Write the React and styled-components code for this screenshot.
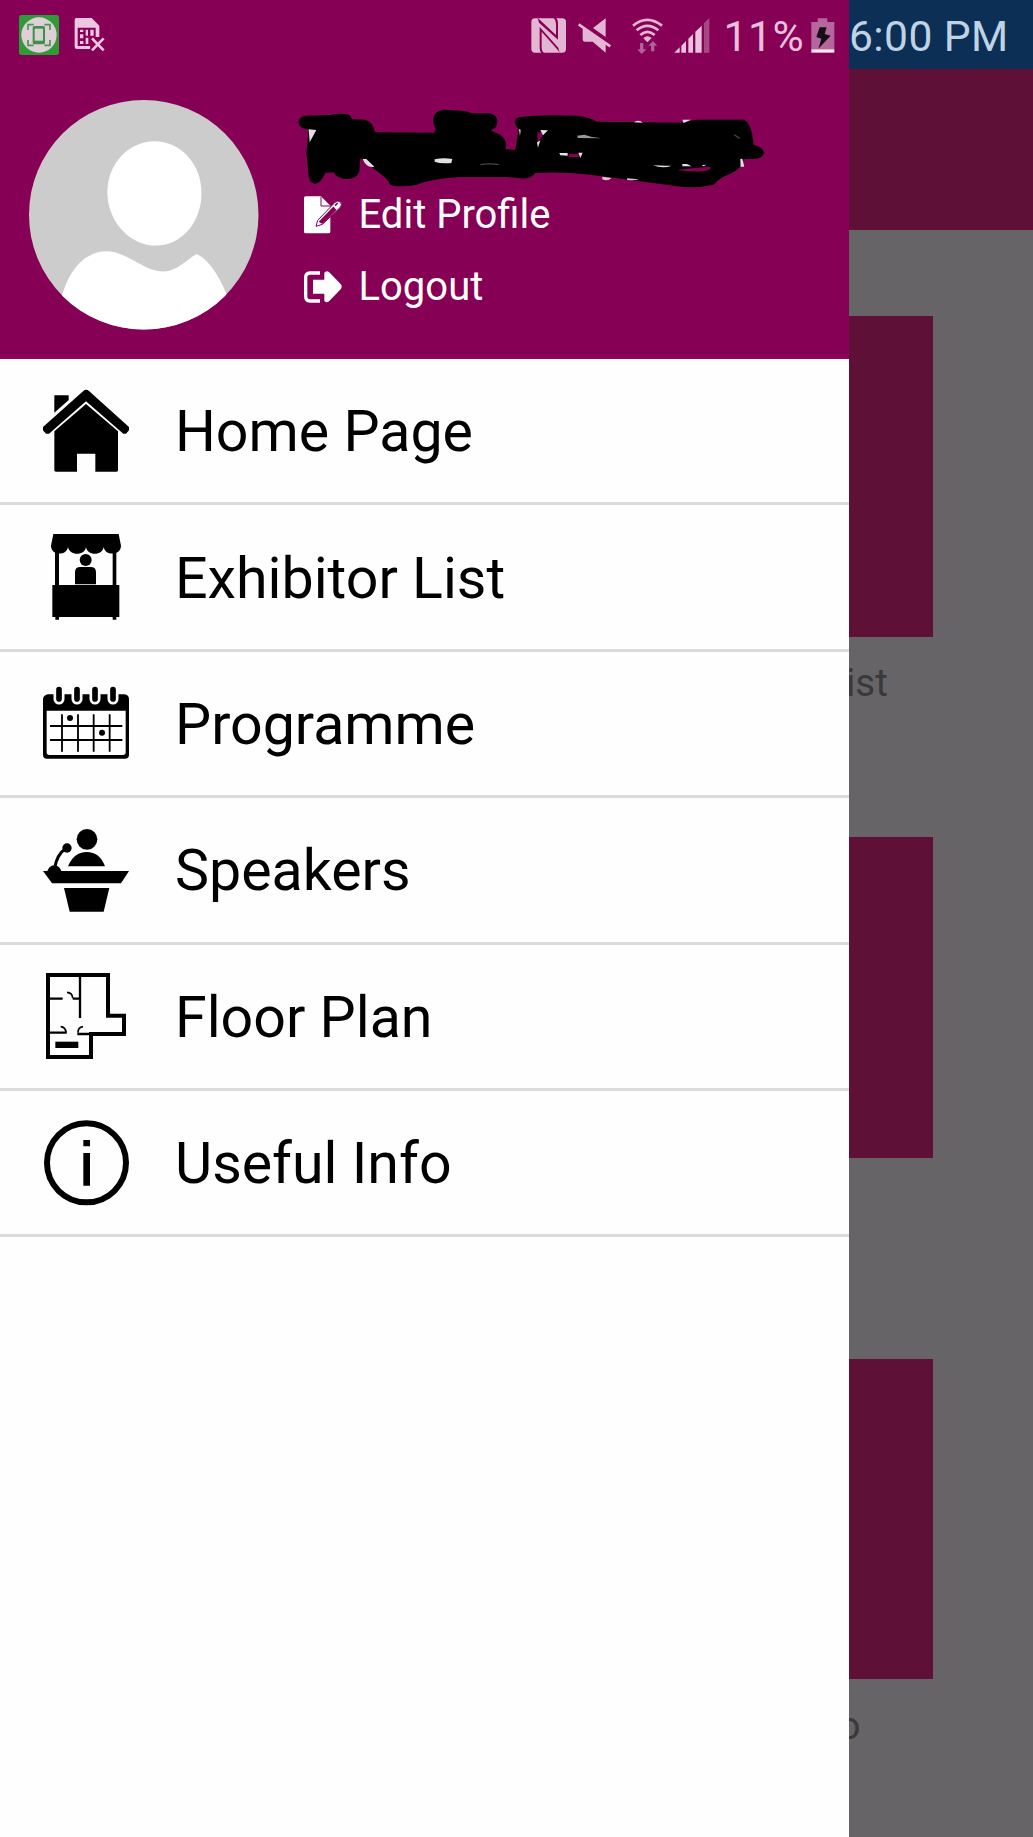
import React from 'react';
import styled, { createGlobalStyle } from 'styled-components';

const GlobalStyle = createGlobalStyle`
    body {
        margin: 0;
        font-family: Roboto, 'Liberation Sans', sans-serif;
    }
    svg {
        display: block;
        flex-shrink: 0;
    }
`
const Screen = styled.div`
    display: flex;
    width: 1033px;
    height: 1837px;
    overflow: hidden;
    background: #666466;
`
const Drawer = styled.div`
    width: 849px;
    flex-shrink: 0;
    background: #fefefe;
`
const Page = styled.div`
    flex: 1;
    overflow: hidden;
`
const DrawerHeader = styled.div`
    box-sizing: border-box;
    height: 359px;
    background: #860055;
    border-bottom: 2px solid #930060;
`
const StatusBar = styled.div`
    box-sizing: border-box;
    display: flex;
    align-items: flex-start;
    justify-content: space-between;
    height: 69px;
    padding: 15px 14px 0 19px;
`
const StatusGroup = styled.div`
    display: flex;
    align-items: flex-start;
    gap: ${({ $gap }) => $gap}px;
    padding-top: ${({ $top }) => $top || 0}px;
`
const MuteSlot = styled.div`
    margin-right: 9px;
`
const StatusText = styled.span`
    color: #e9bfdc;
    font-size: 42.6px;
    line-height: 50px;
    height: 40px;
    margin-top: -7px;
    margin-left: 2.5px;
    width: 76.5px;
    letter-spacing: 0.5px;
    white-space: nowrap;
`
const ClockBar = styled.div`
    height: 69px;
    background: #0b2f55;
    color: #c0d3e4;
    font-size: 42.6px;
    line-height: 73px;
    white-space: nowrap;
    letter-spacing: 0.4px;
`
const AppBar = styled.div`
    height: 161px;
    background: #5e1037;
`
const Tile = styled.div`
    width: 84px;
    height: 320.5px;
    margin-top: ${({ $first }) => $first ? 86 : 0}px;
    background: #5e1037;
`
const TileLabel = styled.div`
    box-sizing: border-box;
    height: 200.8px;
    padding-top: 21.5px;
    margin-left: ${({ $shift }) => $shift}px;
    color: #3a393a;
    font-size: 38.5px;
    line-height: 50px;
`
const Profile = styled.div`
    display: flex;
    padding: 31px 0 0 29px;
`
const ProfileInfo = styled.div`
    display: flex;
    flex-direction: column;
    padding: 9px 0 0 38.5px;
`
const ProfileLinks = styled.div`
    margin-top: -9px;
`
const ProfileLink = styled.div`
    display: flex;
    align-items: center;
    gap: 17px;
    height: 72px;
    padding-left: 6.5px;
    color: #fff;
    font-size: 40px;
    line-height: 72px;
`
const MenuItem = styled.div`
    box-sizing: border-box;
    display: flex;
    align-items: center;
    gap: 46px;
    height: 146.4px;
    padding-left: 43px;
    border-bottom: 3px solid #dcdbdc;
`
const MenuLabel = styled.div`
    padding-top: 3px;
    color: #000;
    font-size: 57.3px;
    line-height: 80px;
    white-space: nowrap;
`

const AppIcon = () => (
    <svg width="40" height="40" viewBox="57 45 120 120">
        <rect x="57" y="45" width="120" height="120" rx="8" fill="#2f9b37" />
        <circle cx="117" cy="105" r="53" fill="#dfd0d8" />
        <path d="M84 90V74H101M133 74H150V90M150 120V136H133M101 136H84V120" fill="none" stroke="#4b9652" strokeWidth="5" />
        <rect x="98" y="78" width="37" height="55" rx="5" fill="#40904a" />
        <rect x="104" y="86" width="25" height="36" fill="#d5d2d0" />
    </svg>
)
const SimIcon = () => (
    <svg width="31" height="35" viewBox="223 52 93 105">
        <path d="M230 55H276L299 78V112L286 112L270 126L272 148H232Q225 148 225 141V62Q225 55 230 55Z" fill="#edc6e1" />
        <path d="M234 84H288V114L276 122V139H234Z" fill="#860055" />
        <path d="M241 90h10v7h-10zM241 104h10v12h-10zM241 124h10v9h-10zM258 90h7v18h-7zM272 90h10v18h-10zM258 114h8v19h-8z" fill="#edc6e1" />
        <path d="M277 116L312 152M312 116L277 152" stroke="#860055" strokeWidth="15" />
        <path d="M277 116L312 152M312 116L277 152" stroke="#edc6e1" strokeWidth="8" />
    </svg>
)
const NfcIcon = () => (
    <svg width="35" height="35" viewBox="62 53 105 105">
        <rect x="63" y="54" width="104" height="103" rx="11" fill="#e3b6d4" />
        <path d="M82 53L88 58L137 104V70Q137 59 130 53H138Q143 58 143 68V118L86 67ZM148 158L143 150L94 94V142Q94 153 101 158H93Q88 153 88 143V80L144 142Z" fill="#860055" />
    </svg>
)
const MuteIcon = () => (
    <svg width="35" height="35" viewBox="199 53 105 105">
        <path d="M285 54V110L247 83ZM216 84L285 128V157L246 124H222Q216 124 216 117Z" fill="#e3b6d4" />
        <path d="M204 72L299 138" stroke="#e3b6d4" strokeWidth="8" />
    </svg>
)
const WifiIcon = () => (
    <svg width="31" height="36" viewBox="364 50 93 108">
        <g fill="none" stroke="#e3b6d4" strokeWidth="8">
            <path d="M367 73Q410 38 454 73" />
            <path d="M378 87Q410 60 443 87" />
            <path d="M389 101Q410 82 432 101" />
        </g>
        <path d="M398 110Q410 100 423 110L410 123Z" fill="#e3b6d4" />
        <path d="M388 125h10v19h9l-14 14l-13-14h8zM421 150v-17h-8l14-14l13 14h-9v17z" fill="#b0609a" />
    </svg>
)
const SignalIcon = () => (
    <svg width="36" height="35" viewBox="491 53 108 105">
        <path d="M492 157L508 141V157ZM513 136L527 122V157H513ZM534 115L548 101V157H534ZM555 94L574 76V157H555Z" fill="#e9c3dc" />
        <path d="M581 69L597 53V157H581Z" fill="#a34a86" />
    </svg>
)
const BatteryIcon = () => (
    <svg width="24" height="35" viewBox="904 53 72 105">
        <path d="M924 54H953V65H974V148H905V65H924Z" fill="#b5679d" />
        <rect x="905" y="147" width="69" height="10" fill="#fbe6f4" />
        <path d="M930 81H951L945 101L963 106L926 145L935 115L920 110Z" fill="#161016" />
    </svg>
)
const Avatar = () => (
    <svg width="229.5" height="229.5" viewBox="87 60.5 688 688">
        <clipPath id="avatar"><circle cx="431" cy="404.5" r="344" /></clipPath>
        <g clipPath="url(#avatar)">
            <rect x="87" y="60" width="690" height="690" fill="#cdcccc" />
            <path d="M463 184C540 184 604 250 604 340C604 426 545 497 468 497C390 497 322 426 322 336C322 250 388 184 463 184Z" fill="#fff" />
            <path d="M180 670Q198 590 240 548Q285 504 345 517C400 533 440 575 490 575C530 575 560 538 590 522Q640 548 678 640L720 760H150Z" fill="#fff" />
        </g>
    </svg>
)
// name is scribbled out, only a few bits of the letters stay visible
const Scribble = () => (
    <svg width="467.3" height="78.7" viewBox="50 58 1402 236">
        <path d="M75 78L150 76Q180 68 208 76L215 88L255 90Q280 98 284 128L460 129Q470 122 463 112Q446 68 490 60L555 64L575 71L630 71Q655 78 650 105Q645 118 630 122L660 135Q682 150 675 178L705 181L715 118Q695 98 710 84Q760 73 890 78Q930 82 950 96L1200 99L1250 90L1390 90Q1414 98 1420 166Q1450 172 1451 190Q1448 208 1415 208L1390 208Q1388 235 1350 252Q1320 262 1300 285Q1240 298 1190 290L1090 276L1000 264L930 255Q850 246 765 250Q750 270 720 266L680 262L540 262Q450 268 410 285Q350 295 330 285Q320 265 290 245L240 205L237 245Q230 268 200 268Q170 268 160 248L135 250Q120 282 105 282Q85 280 84 250L78 190L85 120Q52 115 55 95Q58 80 75 78Z" fill="#000" />
        <path d="M1195 240Q1240 236 1270 233Q1290 228 1292 236Q1275 252 1195 242ZM771 130L784 126L788 138L772 156ZM865 193H895V202H865Z" fill="#860055" />
        <path d="M85 119L108 121L88 158ZM247 208L258 208L282 231Q258 236 247 208ZM463 209Q490 203 516 208L513 220Q480 223 463 216ZM780 121L803 122L788 137ZM716 118L721 120L719 140ZM770 158L780 152L773 174ZM837 190L862 190V198L840 197ZM894 189L907 189L900 205ZM1060 98Q1074 88 1088 99ZM1206 90H1232L1210 100ZM1380 208L1386 207L1392 231H1381ZM1118 227Q1148 238 1174 228Q1148 229 1118 227ZM1206 223L1220 223L1234 230H1206ZM1264 226L1278 225L1270 230Z" fill="#e4dfe2" />
        <path d="M966 261L994 265Q982 276 966 269ZM1040 266L1075 269Q1058 274 1040 270Z" fill="#cfcacd" />
        <path d="M890 138L912 135L935 142L965 146L893 145Z" fill="#999" />
        <path d="M600 225Q630 220 655 225M1362 135L1378 146" fill="none" stroke="#444" strokeWidth="4" />
    </svg>
)
const EditIcon = () => (
    <svg width="38" height="38" viewBox="72 308 114 114">
        <path d="M77 309H123L151 337V415Q151 420 146 420H77Q72 420 72 415V314Q72 309 77 309Z" fill="#fff" />
        <path d="M123 310V338H151" fill="none" stroke="#860055" strokeWidth="3" />
        <path d="M108 399L113 381L165 327Q174 319 182 327Q188 335 180 343L127 393Z" fill="#fff" stroke="#860055" strokeWidth="3" />
        <path d="M120 385L160 343L166 350L127 389Z" fill="#860055" stroke="#860055" strokeWidth="5" />
        <path d="M165 337L173 329" stroke="#860055" strokeWidth="5" />
    </svg>
)
const LogoutIcon = () => (
    <svg width="38" height="32" viewBox="72 541 114 96">
        <path d="M120 547H90Q77 548 77 560V617Q77 631 90 631H120" fill="none" stroke="#fff" strokeWidth="10" />
        <path d="M99 567H133V546Q139 538 147 544L182 580Q188 588 182 596L147 632Q139 639 133 630V609H99Z" fill="#fff" />
    </svg>
)
const HomeIcon = () => (
    <svg width="86" height="86" viewBox="39 53 258 258">
        <path d="M73 75H116V89L73 127Z" />
        <path d="M168 58Q173 58 177 62L297 170V180L288 190H280L168 93L57 190H48L39 180V170L160 62Q164 58 168 58Z" />
        <path d="M168 101L264 183V300Q264 304 260 304H196V250H141V304H78Q73 304 73 300V183Z" />
    </svg>
)
const StallIcon = () => (
    <svg width="86" height="86" viewBox="39 492 258 258">
        <path d="M70 492H266L273 527C273 558 224 558 221 530C219 558 170 558 168 530C166 558 117 558 114 530C111 558 63 558 63 527Z" />
        <path d="M75 545H87V646H75ZM248 545H259V646H248ZM67 645H268V741H259V749H248V741H87V749H76V741H67Z" />
        <circle cx="167" cy="570" r="18" />
        <path d="M135 643V607Q135 591 151 591H182Q198 591 198 607V643Z" />
    </svg>
)
const CalendarIcon = () => (
    <svg width="86" height="86" viewBox="39 31 258 258">
        <path d="M53 74H283Q297 76 297 89V255Q297 267 285 267H51Q39 267 39 255V89Q39 78 53 74Z" />
        <path d="M50 123H287V248Q287 256 279 256H58Q50 256 50 248Z" fill="#fefefe" />
        {[87, 141, 195, 249].map((x) => (
            <g key={x} fill="none" strokeLinecap="round">
                <path d={`M${x} 68V88`} stroke="#fefefe" strokeWidth="33" />
                <path d={`M${x} 60V88`} stroke="#000" strokeWidth="17" />
            </g>
        ))}
        <path d="M60 169H277M60 211H277M96 134V246M144 134V246M191 134V246M239 134V246" stroke="#000" strokeWidth="5.500" />
        <circle cx="120" cy="145" r="9" />
        <circle cx="216" cy="189" r="9" />
    </svg>
)
const SpeakerIcon = () => (
    <svg width="86" height="86" viewBox="39 470 258 258">
        <circle cx="171" cy="507" r="31" />
        <path d="M114 588Q132 545 170 545Q209 545 225 588Z" />
        <path d="M74 594Q80 553 108 534" fill="none" stroke="#000" strokeWidth="9" />
        <circle cx="111" cy="533" r="14" />
        <circle cx="73" cy="606" r="21" />
        <path d="M39 602H297L273 639H66ZM102 653H238L221 724H119Z" />
    </svg>
)
const PlanIcon = () => (
    <svg width="86" height="86" viewBox="39 39 258 258">
        <path d="M54 45H234V167H282V222H183V291H54Z" fill="none" stroke="#000" strokeWidth="12" />
        <path d="M60 116H98M128 116H150M150 50V174M60 218H110M142 222H184" stroke="#000" strokeWidth="7" />
        <path d="M111 97Q127 98 128 114M92 200Q107 201 108 218M159 200Q144 202 144 218" fill="none" stroke="#000" strokeWidth="5" />
        <rect x="76" y="245" width="69" height="19" />
    </svg>
)
const InfoIcon = () => (
    <svg width="86" height="86" viewBox="39 479 258 258">
        <circle cx="169.500" cy="607.500" r="118.500" fill="none" stroke="#000" strokeWidth="18" />
        <path d="M160 539H180V558H160ZM160 578H180V676H160Z" />
    </svg>
)

const menu = [
    { title: 'Home Page', Icon: HomeIcon },
    { title: 'Exhibitor List', Icon: StallIcon },
    { title: 'Programme', Icon: CalendarIcon },
    { title: 'Speakers', Icon: SpeakerIcon },
    { title: 'Floor Plan', Icon: PlanIcon },
    { title: 'Useful Info', Icon: InfoIcon },
]

// visible ends of the tile captions next to the open drawer
const tiles = [
    { label: 'ist', shift: -3 },
    { label: '', shift: 0 },
    { label: 'o', shift: -10.5 },
]

function App() {
    return (
        <>
            <GlobalStyle />
            <Screen>
                <Drawer>
                    <DrawerHeader>
                        <StatusBar>
                            <StatusGroup $gap={15}>
                                <AppIcon />
                                <StatusGroup $top={2}><SimIcon /></StatusGroup>
                            </StatusGroup>
                            <StatusGroup $gap={11} $top={3}>
                                <NfcIcon />
                                <MuteSlot><MuteIcon /></MuteSlot>
                                <WifiIcon />
                                <SignalIcon />
                                <StatusText>11%</StatusText>
                                <BatteryIcon />
                            </StatusGroup>
                        </StatusBar>
                        <Profile>
                            <Avatar />
                            <ProfileInfo>
                                <Scribble />
                                <ProfileLinks>
                                    <ProfileLink><EditIcon />Edit Profile</ProfileLink>
                                    <ProfileLink><LogoutIcon />Logout</ProfileLink>
                                </ProfileLinks>
                            </ProfileInfo>
                        </Profile>
                    </DrawerHeader>
                    {
                        menu.map(({ title, Icon }) => (
                            <MenuItem key={title}>
                                <Icon />
                                <MenuLabel>{title}</MenuLabel>
                            </MenuItem>
                        ))
                    }
                </Drawer>
                <Page>
                    <ClockBar>6:00 PM</ClockBar>
                    <AppBar />
                    {
                        tiles.map(({ label, shift }, idx) => (
                            <React.Fragment key={idx}>
                                <Tile $first={idx === 0} />
                                <TileLabel $shift={shift}>{label}</TileLabel>
                            </React.Fragment>
                        ))
                    }
                </Page>
            </Screen>
        </>
    )
}

export default App;
